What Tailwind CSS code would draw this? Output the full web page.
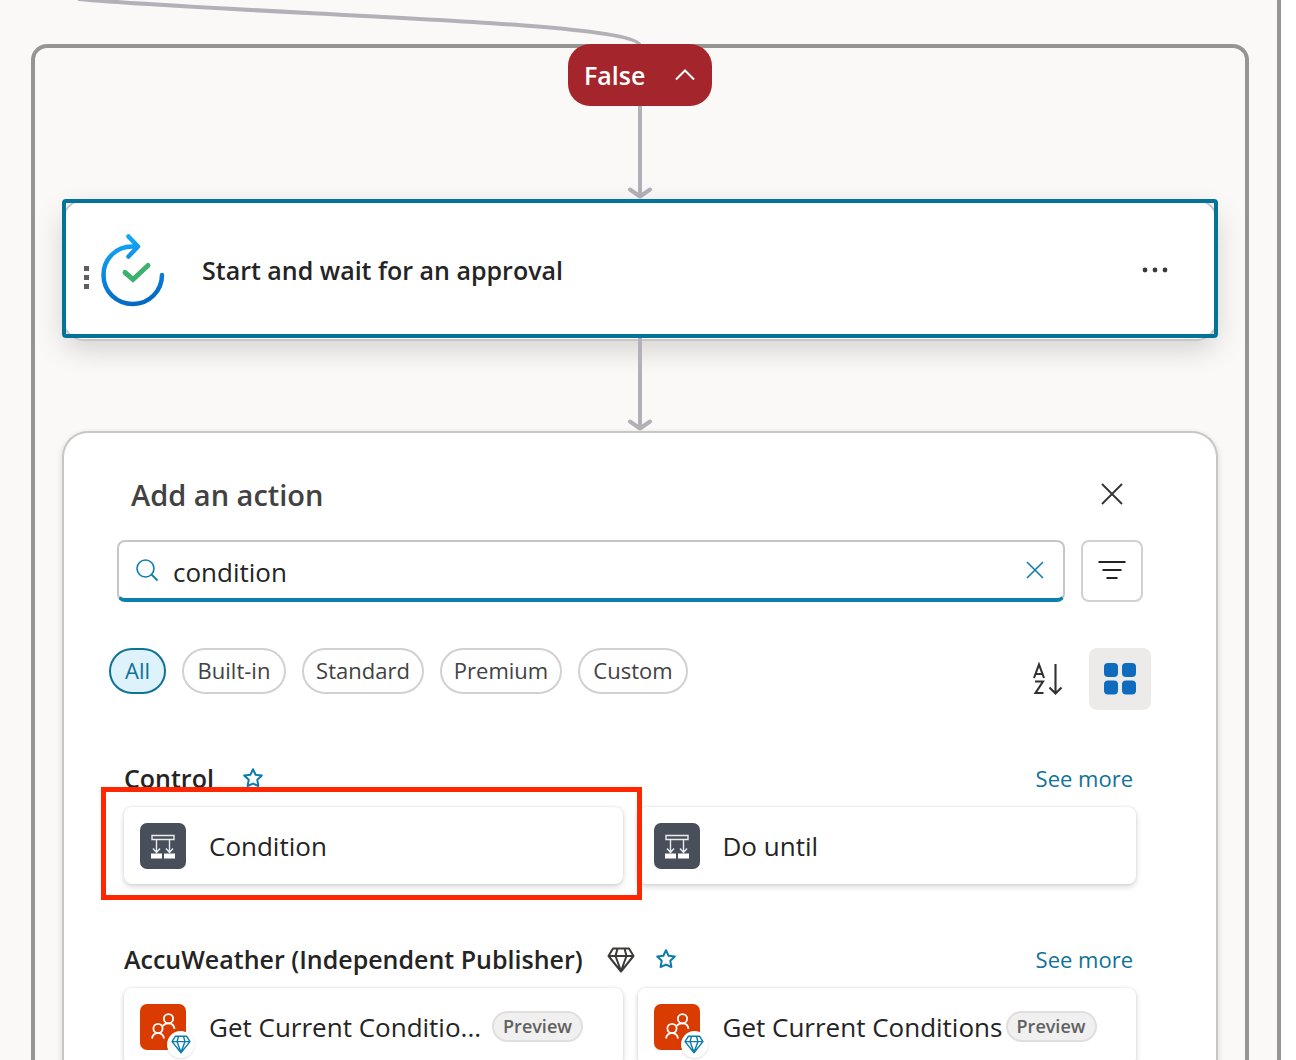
<!DOCTYPE html>
<html lang="en">
<head>
<meta charset="utf-8">
<meta name="viewport" content="width=device-width, initial-scale=1">
<title>Flow designer</title>
<script src="https://cdn.jsdelivr.net/npm/@tailwindcss/browser@4"></script>
</head>
<body class="h-screen overflow-hidden bg-white font-['Segoe_UI','Open_Sans',sans-serif] text-[#242424]">
<svg class="hidden" aria-hidden="true">
  <symbol id="arrow" viewBox="0 0 26 92"><path d="M13 0V90M3 83L13 90L23 83" fill="none" stroke="#b3b0b8" stroke-width="4" stroke-linecap="round" stroke-linejoin="round"/></symbol>
  <symbol id="star" viewBox="0 0 22 22"><path d="M11 2.2L13.6 7.7L19.8 8.5L15.3 12.8L16.4 19L11 16.6L5.6 19L6.7 12.8L2.2 8.5L8.4 7.7Z" fill="none" stroke="#0b7cab" stroke-width="2" stroke-linejoin="round"/></symbol>
  <symbol id="diamond" viewBox="0 0 28 26"><path d="M6 1.5H22L26.5 9L14 24.5L1.5 9ZM1.5 9H26.5M10.500 1.500L8.500 9L14 24L19.500 9L17.500 1.500" fill="none" stroke="currentColor" stroke-width="2" stroke-linejoin="round"/></symbol>
  <symbol id="control" viewBox="0 0 46 46">
    <rect width="46" height="46" rx="7" fill="#484f5a"/>
    <path d="M12 12.500H34V16.500H12ZM16.500 17V29M29.500 17V29M13 25.500L16.500 29.500L20 25.500M26 25.500L29.500 29.500L33 25.500" fill="none" stroke="#e9ecef" stroke-width="1.400"/>
    <path d="M11 30.500H22V35.500H11ZM24 30.500H35V35.500H24Z" fill="#fff"/>
  </symbol>
  <symbol id="people" viewBox="0 0 46 46">
    <rect width="46" height="46" rx="7" fill="#da3b01"/>
    <g fill="none" stroke="#fff" stroke-width="1.800"><circle cx="28.500" cy="14.700" r="4.600"/><circle cx="18" cy="24.500" r="4.600"/><path d="M12 34.500C12.500 31 15 29.200 18 29.200S23.500 31 24 34.500M22.700 22C24 20 26 19.300 28.500 19.300C31.500 19.300 34 21 34.500 24.800"/></g>
  </symbol>
</svg>

<main class="relative mr-[15px] h-full overflow-hidden border-r-4 border-[#979593] bg-[#faf9f8]">
  <svg class="absolute left-0 top-0" width="660" height="46" viewBox="0 0 660 46" aria-hidden="true"><path d="M78 -1C260 15 640 21 640 46" fill="none" stroke="#b3b0b8" stroke-width="4"/></svg>

  <section class="relative mt-11 mr-7 ml-[31px] flex flex-col items-center rounded-2xl border-4 border-b-0 border-[#979593] px-[27px]" aria-label="False branch">
    <button class="-mt-1 flex h-[62px] w-36 items-center justify-between rounded-[22px] bg-[#a4262c] px-4 text-[25px] font-semibold text-white" aria-expanded="true"><span class="pt-0.5">False</span>
      <svg width="22" height="14" viewBox="0 0 22 14" aria-hidden="true"><path d="M2 11.500L11 2.500L20 11.500" fill="none" stroke="#fff" stroke-width="2"/></svg>
    </button>
    <svg width="26" height="93" aria-hidden="true"><use href="#arrow"/></svg>

    <article class="relative flex h-[142px] w-full items-center rounded-[22px] border-2 border-[#c8c6c4] bg-white pr-[43px] pl-[18px] shadow-[0_10px_28px_rgba(0,0,0,0.15)]">
      <svg width="8" height="26" class="mt-4" viewBox="0 0 8 26" aria-hidden="true"><path d="M2 1H7V6H2ZM2 10H7V15H2ZM2 19H7V24H2Z" fill="#605e5c"/></svg>
      <svg class="ml-[10px] shrink-0" width="66" height="76" viewBox="0 0 66 76" aria-hidden="true">
        <defs>
          <linearGradient id="ring" gradientUnits="userSpaceOnUse" x1="20" y1="4" x2="36" y2="74"><stop stop-color="#14a8fb"/><stop offset="1" stop-color="#0367c3"/></linearGradient>
        </defs>
        <path d="M32 14.500C16 14.500 3.500 27 3.500 43C3.500 60 17 72 33 72C49 72 62 59 62 43M28.500 4.500L38 14.500L28.500 24.500M32 14.500H37" fill="none" stroke="url(#ring)" stroke-width="4.500" stroke-linecap="round" stroke-linejoin="round"/>
        <path d="M25 40.500L33 47.500L48 33.500" fill="none" stroke="#3db06d" stroke-width="5" stroke-linecap="round" stroke-linejoin="miter"/>
      </svg>
      <h2 class="ml-9 grow pt-0.5 text-[25px] font-semibold">Start and wait for an approval</h2>
      <button class="p-1" aria-label="More commands"><svg width="28" height="8" viewBox="0 0 28 8"><g fill="#3b3a39"><circle cx="4" cy="4" r="2.400"/><circle cx="14" cy="4" r="2.400"/><circle cx="24" cy="4" r="2.400"/></g></svg></button>
      <span class="absolute -inset-x-0.5 -top-0.5 bottom-px rounded-[4px] border-4 border-[#04739b]"></span>
    </article>
    <svg class="relative -mt-[3px]" width="26" height="93" aria-hidden="true"><use href="#arrow"/></svg>

    <section class="w-full rounded-t-[26px] border-2 border-b-0 border-[#c8c6c4] bg-white pt-[30px] pr-[65px] pb-10 pl-[45px] shadow-[0_2px_6px_rgba(0,0,0,0.14)]" aria-labelledby="add">
      <header class="flex h-[62px] items-center justify-between pr-2 pl-[22px]">
        <h2 id="add" class="pt-0.5 text-[29px] font-semibold text-[#424242]">Add an action</h2>
        <button class="flex size-[62px] items-center justify-center" aria-label="Close"><svg width="24" height="24" viewBox="0 0 24 24"><path d="M2 2L22 22M22 2L2 22" stroke="#323130" stroke-width="1.800"/></svg></button>
      </header>

      <div class="mt-[15px] flex gap-4 px-2">
        <div class="flex h-[62px] grow items-center rounded-lg border-2 border-b-4 border-[#c8c6c4] border-b-[#0b7fad] pr-[14px] pl-4">
          <svg width="24" height="24" viewBox="0 0 24 24" aria-hidden="true"><path d="M16.500 16.500L22.500 22.500" stroke="#0b7fad" stroke-width="1.800"/><circle cx="10.500" cy="10.500" r="8.500" fill="none" stroke="#0b7fad" stroke-width="1.600"/></svg>
          <input class="ml-[14px] min-w-0 grow pt-1 text-[26px] outline-none" aria-label="Search for an action or connector" value="condition">
          <button class="p-1" aria-label="Clear search"><svg width="20" height="20" viewBox="0 0 20 20"><path d="M2 2L18 18M18 2L2 18" stroke="#0b7fad" stroke-width="1.600"/></svg></button>
        </div>
        <button class="flex size-[62px] items-center justify-center rounded-lg border-2 border-[#d1d1d1]" aria-label="Filter"><svg width="28" height="20" viewBox="0 0 28 20"><path d="M.5 1H27.500M4.500 9H23.500M8.500 17H19.500" stroke="#242424" stroke-width="2"/></svg></button>
      </div>

      <div class="mt-[46px] flex h-[62px] items-start justify-between">
        <div class="flex gap-4 text-[22px] text-[#424242]">
          <button class="h-[46px] w-[57px] rounded-full border-2 border-[#0f7299] bg-[#def2fb] pb-0.5 text-[#0f7299]" aria-pressed="true">All</button>
          <button class="h-[46px] w-[104px] rounded-full border-2 border-[#d1d1d1] pb-0.5">Built-in</button>
          <button class="h-[46px] w-[122px] rounded-full border-2 border-[#d1d1d1] pb-0.5">Standard</button>
          <button class="h-[46px] w-[122px] rounded-full border-2 border-[#d1d1d1] pb-0.5">Premium</button>
          <button class="h-[46px] w-[110px] rounded-full border-2 border-[#d1d1d1] pb-0.5">Custom</button>
        </div>
        <div class="flex gap-[10px]">
          <button class="flex size-[62px] items-center justify-center" aria-label="Sort A to Z"><svg width="32" height="34" viewBox="0 0 32 34"><path d="M2 16L7 2.500L12 16M3.500 12H10.500M3 19.500H11L3.500 31H11.500M23.500 2V31M17.500 25.500L23.500 31.500L29.500 25.500" fill="none" stroke="#323130" stroke-width="2.100"/></svg></button>
          <button class="flex size-[62px] items-center justify-center rounded-lg bg-[#edebe9]" aria-label="Grid view" aria-pressed="true"><svg width="32" height="32" viewBox="0 0 32 32" fill="#0f6cbd"><rect width="14" height="14" rx="4"/><rect x="18" width="14" height="14" rx="4"/><rect y="17.500" width="14" height="14" rx="4"/><rect x="18" y="17.500" width="14" height="14" rx="4"/></svg></button>
        </div>
      </div>

      <section class="mt-[49px] px-[15px]">
        <div class="mb-2 flex h-10 items-center">
          <h3 class="text-[25px] font-semibold">Control</h3>
          <button class="ml-7 pb-0.5" aria-label="Favorite Control"><svg width="22" height="22"><use href="#star"/></svg></button>
          <a href="#" class="mr-[3px] ml-auto pb-0.5 text-[22px] text-[#0f7299]">See more</a>
        </div>
        <div class="grid grid-cols-2 gap-[15px]">
          <div class="relative">
            <button class="flex h-[77px] w-full items-center rounded-lg bg-white px-4 text-left text-[26px] shadow-[0_3px_6px_rgba(0,0,0,0.14),0_0_3px_rgba(0,0,0,0.12)]"><svg class="mr-[23px] shrink-0" width="46" height="46" aria-hidden="true"><use href="#control"/></svg><span class="pt-0.5">Condition</span></button>
            <span class="pointer-events-none absolute -top-5 -right-[19px] -bottom-4 -left-[23px] z-10 border-5 border-[#ff2600]"></span>
          </div>
          <button class="flex h-[77px] w-full items-center rounded-lg bg-white px-4 text-left text-[26px] shadow-[0_3px_6px_rgba(0,0,0,0.14),0_0_3px_rgba(0,0,0,0.12)]"><svg class="mr-[23px] shrink-0" width="46" height="46" aria-hidden="true"><use href="#control"/></svg><span class="pt-0.5">Do until</span></button>
        </div>
      </section>

      <section class="mt-14 px-[15px]">
        <div class="mb-2 flex h-10 items-center">
          <h3 class="text-[25px] font-semibold">AccuWeather (Independent Publisher)</h3>
          <svg class="ml-6 text-[#3b3a39]" width="28" height="26" role="img" aria-label="Premium"><use href="#diamond"/></svg>
          <button class="ml-5 pb-0.5" aria-label="Favorite AccuWeather"><svg width="22" height="22"><use href="#star"/></svg></button>
          <a href="#" class="mr-[3px] ml-auto pb-0.5 text-[22px] text-[#0f7299]">See more</a>
        </div>
        <div class="grid grid-cols-2 gap-[15px]">
          <button class="flex h-[77px] w-full items-center rounded-lg bg-white px-4 text-left text-[26px] shadow-[0_3px_6px_rgba(0,0,0,0.14),0_0_3px_rgba(0,0,0,0.12)]">
            <span class="relative mr-[23px] shrink-0"><svg width="46" height="46" aria-hidden="true"><use href="#people"/></svg><span class="absolute -right-2 -bottom-2 flex size-[27px] items-center justify-center rounded-full bg-white text-[#0b7cab] shadow"><svg width="20" height="19" aria-hidden="true"><use href="#diamond"/></svg></span></span>
            <span class="w-[275px] pt-0.5 whitespace-nowrap">Get Current Conditio...</span>
            <span class="ml-2 flex h-[31px] w-[91px] items-center justify-center rounded-full border-2 border-[#e1dfdd] bg-[#f0f0f0] text-[18px] font-semibold text-[#616161]">Preview</span>
          </button>
          <button class="flex h-[77px] w-full items-center rounded-lg bg-white px-4 text-left text-[26px] shadow-[0_3px_6px_rgba(0,0,0,0.14),0_0_3px_rgba(0,0,0,0.12)]">
            <span class="relative mr-[23px] shrink-0"><svg width="46" height="46" aria-hidden="true"><use href="#people"/></svg><span class="absolute -right-2 -bottom-2 flex size-[27px] items-center justify-center rounded-full bg-white text-[#0b7cab] shadow"><svg width="20" height="19" aria-hidden="true"><use href="#diamond"/></svg></span></span>
            <span class="w-[275px] pt-0.5 whitespace-nowrap">Get Current Conditions</span>
            <span class="ml-2 flex h-[31px] w-[91px] items-center justify-center rounded-full border-2 border-[#e1dfdd] bg-[#f0f0f0] text-[18px] font-semibold text-[#616161]">Preview</span>
          </button>
        </div>
      </section>
    </section>
  </section>
</main>
</body>
</html>
